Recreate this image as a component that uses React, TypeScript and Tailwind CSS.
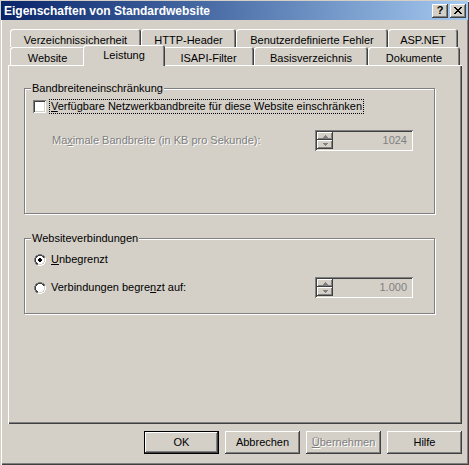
import React from "react";

const FONT = { fontFamily: '"Liberation Sans", Arial, sans-serif' };

const raised =
  "shadow-[inset_-1px_-1px_#404040,inset_1px_1px_#ffffff,inset_-2px_-2px_#808080,inset_2px_2px_#d4d0c8]";

function Tab({ label, w, active }: { label: string; w: number; active?: boolean }) {
  if (active) {
    return (
      <div
        style={{ width: w }}
        className="relative z-10 -mx-[2px] mb-[-1px] h-[21px] bg-[#d4d0c8] rounded-t-[3px] shadow-[inset_1px_1px_#ffffff,inset_-1px_0_#404040,inset_-2px_0_#808080] flex items-start justify-center pt-[4px] text-[11px] text-black leading-[13px]"
      >
        {label}
      </div>
    );
  }
  return (
    <div
      style={{ width: w }}
      className="h-[18px] bg-[#d4d0c8] rounded-t-[3px] shadow-[inset_1px_1px_#ffffff,inset_-1px_0_#404040,inset_-2px_0_#808080] flex items-start justify-center pt-[5px] text-[11px] text-black leading-[13px]"
    >
      {label}
    </div>
  );
}

function Spin({ value }: { value: string }) {
  return (
    <div className="w-[98px] h-[21px] bg-[#d4d0c8] shadow-[inset_1px_1px_#808080,inset_-1px_-1px_#ffffff,inset_2px_2px_#404040,inset_-2px_-2px_#d4d0c8] flex items-center pl-[2px] pr-[6px]">
      <div className="flex flex-col">
        <div className={`w-[16px] h-[8px] bg-[#d4d0c8] ${raised} flex items-center justify-center`}>
          <svg width="5" height="3" viewBox="0 0 5 3">
            <path d="M2 0h1v1h1v1h1v1H0V2h1V1h1z" fill="#808080" />
          </svg>
        </div>
        <div className={`w-[16px] h-[9px] bg-[#d4d0c8] ${raised} flex items-center justify-center`}>
          <svg width="5" height="3" viewBox="0 0 5 3">
            <path d="M0 0h5v1H4v1H3v1H2V2H1V1H0z" fill="#808080" />
          </svg>
        </div>
      </div>
      <div className="ml-auto text-[11px] text-[#808080] leading-[13px]">{value}</div>
    </div>
  );
}

function Radio({ checked }: { checked?: boolean }) {
  return (
    <svg width="12" height="12" viewBox="0 0 12 12" className="shrink-0">
      <path d="M4 0h4v1h2v1h1v2h1v4h-1v2h-1v1H8v1H4v-1H2v-1H1V8H0V4h1V2h1V1h2z" fill="#808080" />
      <path d="M4 1h4v1h2v2h1v4h-1v2H8v1H4v-1H2V8H1V4h1V2h2z" fill="#404040" />
      <path d="M4 2h4v1h1v1h1v4H9v1H8v1H4V9H3V8H2V4h1V3h1z" fill="#ffffff" />
      <path d="M11 4h1v4h-1v2h-1v1H8v1H4v-1h4v-1h2V8h1z" fill="#ffffff" />
      <path d="M10 4h1v4h-1v2H8v1H4v-1h4V9h1V8h1z" fill="#d4d0c8" />
      {checked && <path d="M5 4h2v1h1v2H7v1H5V7H4V5h1z" fill="#000000" />}
    </svg>
  );
}

function GroupBox({
  title,
  h,
  children,
}: {
  title: string;
  h: number;
  children: React.ReactNode;
}) {
  return (
    <div
      style={{ height: h }}
      className="relative w-[411px] ml-[16px] border border-[#808080] shadow-[inset_1px_1px_#ffffff,1px_1px_#ffffff]"
    >
      <span className="absolute left-[6px] top-[-7px] bg-[#d4d0c8] px-[1px] text-[11px] leading-[13px] text-black">
        {title}
      </span>
      {children}
    </div>
  );
}

function Button({ children, def, disabled }: { children: React.ReactNode; def?: boolean; disabled?: boolean }) {
  return (
    <div
      className={`w-[75px] h-[23px] bg-[#d4d0c8] flex items-center justify-center text-[11px] leading-[13px] ${
        def
          ? "shadow-[inset_0_0_0_1px_#000000,inset_-2px_-2px_#404040,inset_2px_2px_#ffffff,inset_-3px_-3px_#808080]"
          : raised
      } ${disabled ? "text-[#808080] [text-shadow:1px_1px_0_#ffffff]" : "text-black"}`}
    >
      {children}
    </div>
  );
}

export default function App() {
  return (
    <div
      style={FONT}
      className="w-[469px] h-[465px] bg-[#d4d0c8] flex flex-col shadow-[inset_1px_1px_#d4d0c8,inset_2px_2px_#ffffff,inset_-1px_-1px_#404040,inset_-2px_-2px_#808080] overflow-hidden"
    >
      {/* title bar */}
      <div className="mx-[1px] mt-[1px] h-[19px] bg-gradient-to-r from-[#0a246a] to-[#a6caf0] flex items-center pl-[3px] pr-[2px]">
        <span className="text-white font-bold text-[12px] leading-[14px]">Eigenschaften von Standardwebsite</span>
        <div className="ml-auto flex gap-[2px]">
          <div className={`w-[16px] h-[14px] bg-[#d4d0c8] ${raised} flex items-center justify-center text-[11px] font-bold leading-none text-black pb-[1px]`}>
            ?
          </div>
          <div className={`w-[16px] h-[14px] bg-[#d4d0c8] ${raised} flex items-center justify-center`}>
            <svg width="8" height="7" viewBox="0 0 8 7">
              <path d="M0 0h2v1h1v1h2V1h1V0h2v1H7v1H6v1H5v1h1v1h1v1h1v1H6V6H5V5H3v1H2v1H0V6h1V5h1V4h1V3H2V2H1V1H0z" fill="#000" />
            </svg>
          </div>
        </div>
      </div>

      {/* tab row 1 */}
      <div className="mt-[9px] ml-[10px] flex">
        <Tab label="Verzeichnissicherheit" w={131} />
        <Tab label="HTTP-Header" w={95} />
        <Tab label="Benutzerdefinierte Fehler" w={152} />
        <Tab label="ASP.NET" w={70} />
      </div>
      {/* tab row 2 */}
      <div className="ml-[10px] h-[18px] flex items-end">
        <Tab label="Website" w={75} />
        <Tab label="Leistung" w={82} active />
        <Tab label="ISAPI-Filter" w={91} />
        <Tab label="Basisverzeichnis" w={114} />
        <Tab label="Dokumente" w={92} />
      </div>

      {/* panel */}
      <div className="ml-[8px] w-[454px] h-[359px] shadow-[inset_1px_1px_#ffffff,inset_-1px_-1px_#404040,inset_-2px_-2px_#808080] pt-[23px]">
        <GroupBox title="Bandbreiteneinschränkung" h={126}>
          <div className="pl-[8px] mt-[11px] flex items-center h-[13px]">
            <div className="w-[13px] h-[13px] bg-white shadow-[inset_1px_1px_#808080,inset_-1px_-1px_#ffffff,inset_2px_2px_#404040,inset_-2px_-2px_#d4d0c8] shrink-0" />
            <span className="ml-[3px] px-[1px] border border-dotted border-black text-[11px] leading-[13px] text-black">
              <u>V</u>erfügbare Netzwerkbandbreite für diese Website einschränken
            </span>
          </div>
          <div className="mt-[17px] flex items-center h-[21px] pl-[27px] pr-[21px]">
            <span className="text-[11px] leading-[13px] text-[#808080] [text-shadow:1px_1px_0_#ffffff]">
              Ma<u>x</u>imale Bandbreite (in KB pro Sekunde):
            </span>
            <div className="ml-auto">
              <Spin value="1024" />
            </div>
          </div>
        </GroupBox>

        <div className="h-[24px]" />

        <GroupBox title="Websiteverbindungen" h={76}>
          <div className="pl-[9px] mt-[14px] flex items-center h-[13px]">
            <Radio checked />
            <span className="ml-[5px] text-[11px] leading-[13px] text-black">
              <u>U</u>nbegrenzt
            </span>
          </div>
          <div className="mt-[11px] flex items-center h-[21px] pl-[9px] pr-[21px]">
            <Radio />
            <span className="ml-[5px] text-[11px] leading-[13px] text-black">
              Verbindungen begre<u>n</u>zt auf:
            </span>
            <div className="ml-auto">
              <Spin value="1.000" />
            </div>
          </div>
        </GroupBox>
      </div>

      {/* buttons */}
      <div className="mt-[7px] flex justify-end gap-[6px] pr-[7px]">
        <Button def>OK</Button>
        <Button>Abbrechen</Button>
        <Button disabled>
          <u>Ü</u>bernehmen
        </Button>
        <Button>Hilfe</Button>
      </div>
    </div>
  );
}
